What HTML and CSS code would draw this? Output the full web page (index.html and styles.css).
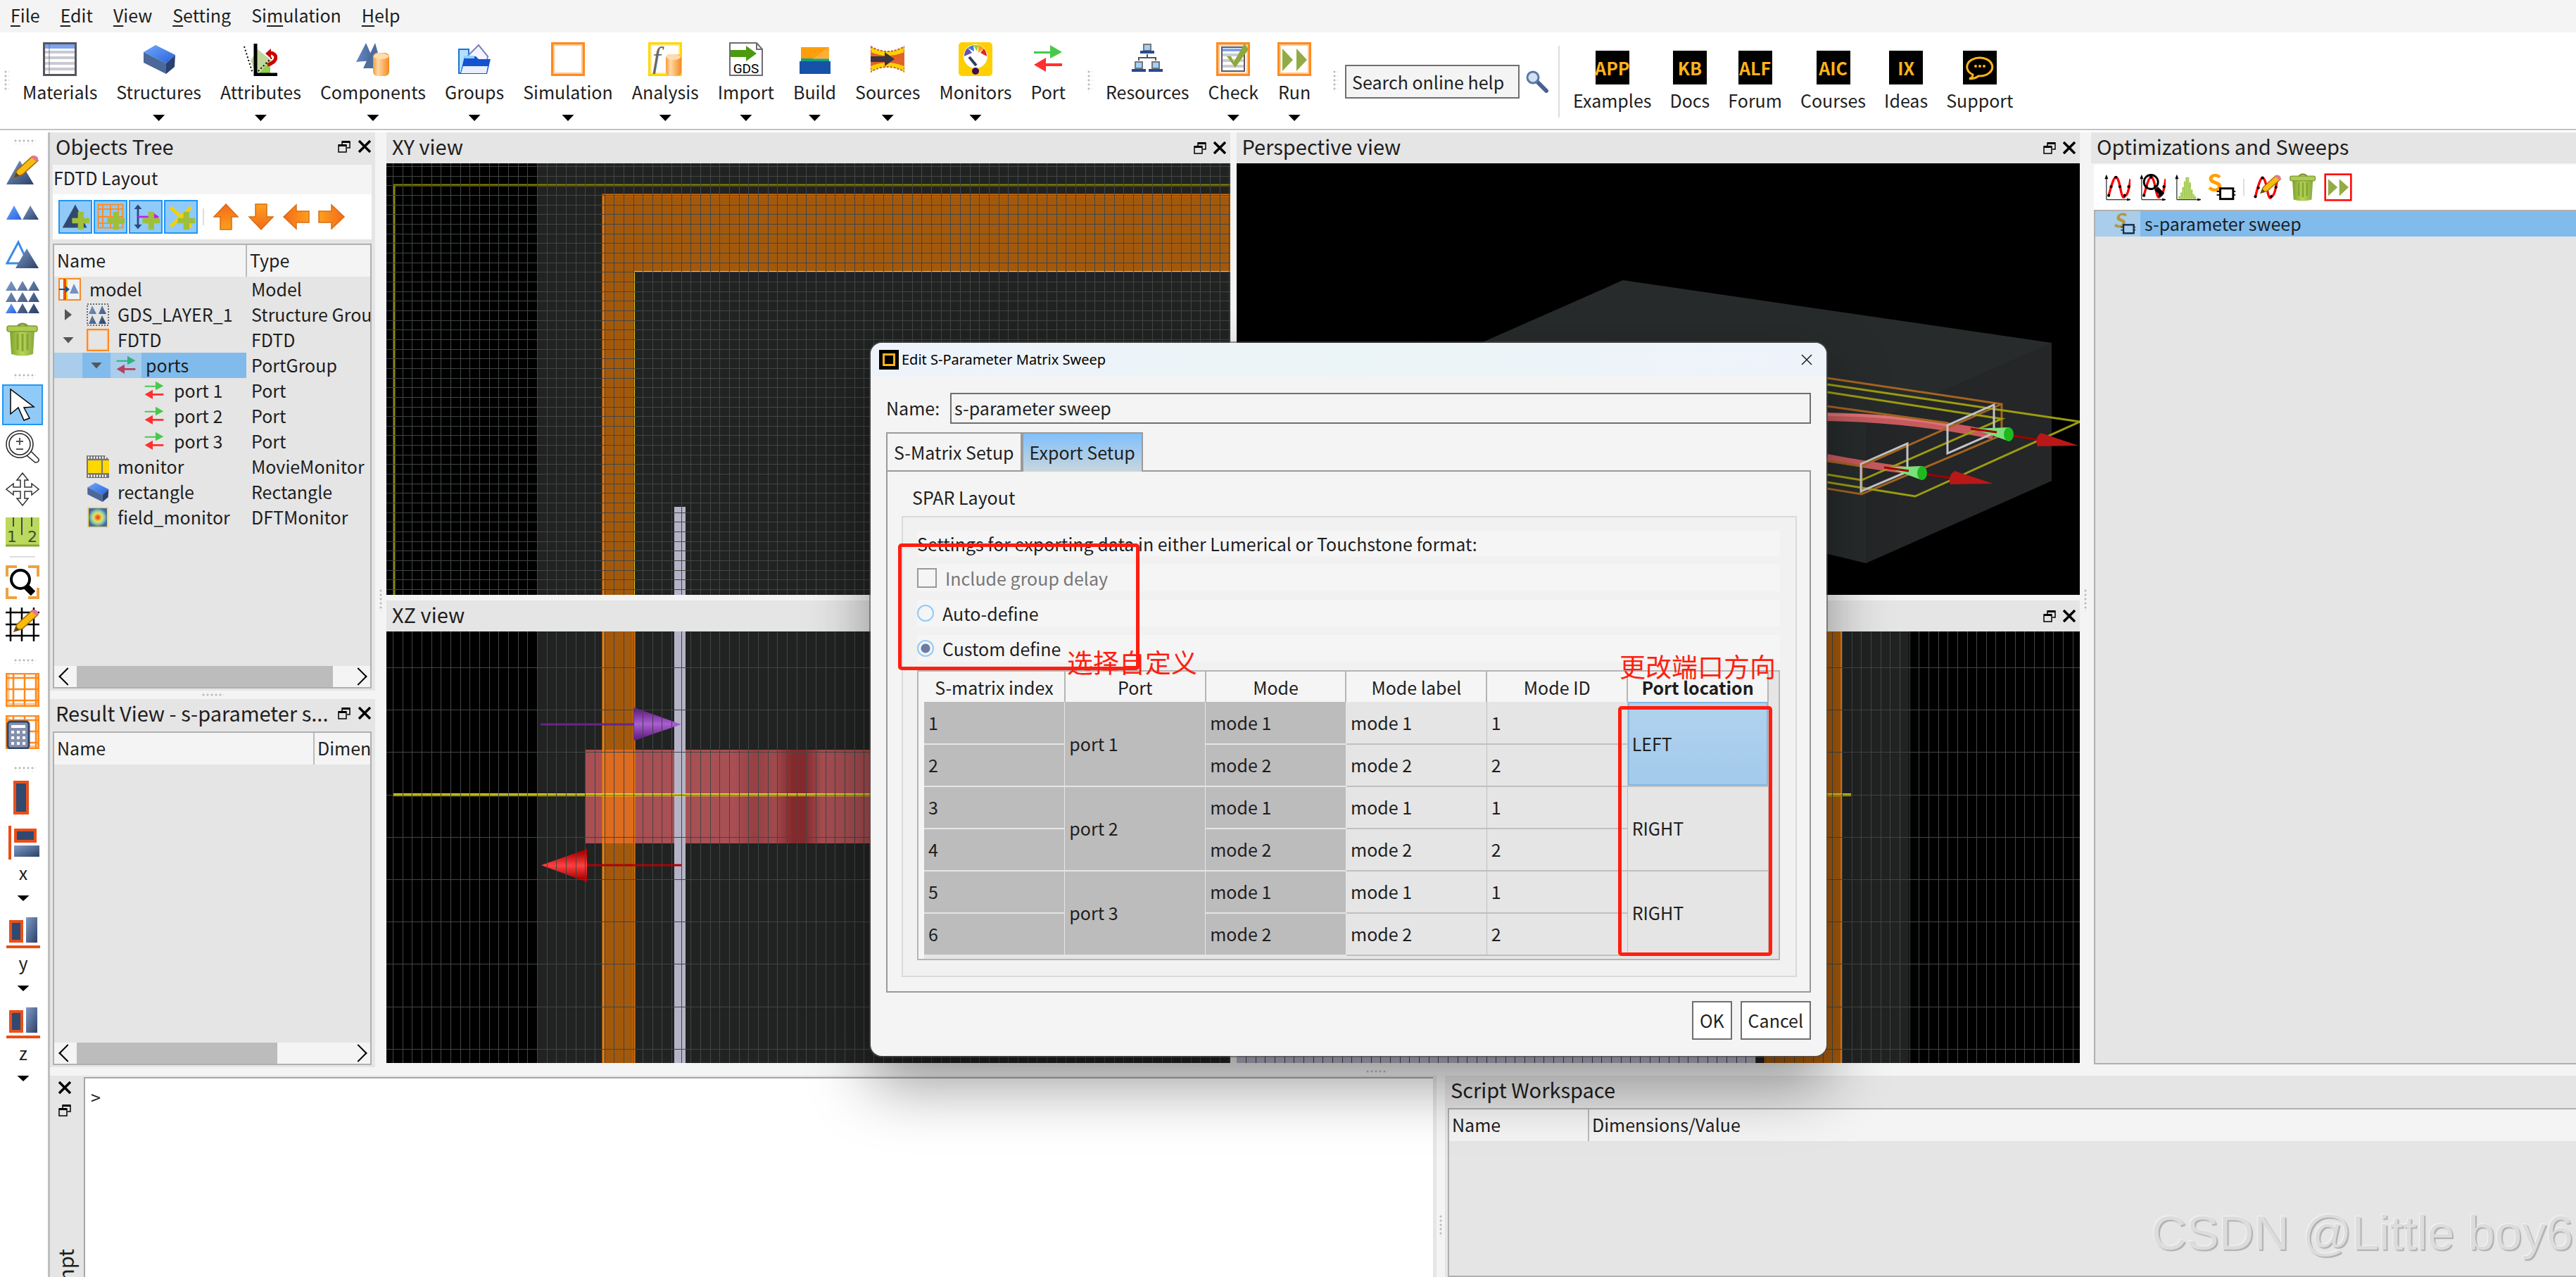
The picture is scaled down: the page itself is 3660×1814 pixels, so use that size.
FILE: index.html
```html
<!DOCTYPE html>
<html lang="en">
<head>
<meta charset="utf-8">
<title>FDTD Layout</title>
<link rel="stylesheet" href="styles.css">
</head>
<body>
<svg class="defs" aria-hidden="true">
  <defs>
    <linearGradient id="gBlue" x1="0" y1="0" x2="1" y2="1"><stop offset="0" stop-color="#6fa8ff"/><stop offset="1" stop-color="#2a62d8"/></linearGradient>
    <linearGradient id="gSteel" x1="0" y1="0" x2="1" y2="1"><stop offset="0" stop-color="#7f9cc8"/><stop offset="1" stop-color="#2c4068"/></linearGradient>
    <linearGradient id="gSteelH"><stop offset="0" stop-color="#6287c4"/><stop offset="1" stop-color="#4a6898"/></linearGradient>
    <linearGradient id="gCyl"><stop offset="0" stop-color="#f79a32"/><stop offset=".3" stop-color="#ffd9a8"/><stop offset="1" stop-color="#f58a1c"/></linearGradient>
    <linearGradient id="gGreen"><stop offset="0" stop-color="#7da32c"/><stop offset=".5" stop-color="#b9d65a"/><stop offset="1" stop-color="#86a93a"/></linearGradient>
    <linearGradient id="gOrange" x1="0" y1="0" x2="0" y2="1"><stop offset="0" stop-color="#f5691a"/><stop offset="1" stop-color="#fca01e"/></linearGradient>
    <linearGradient id="gPink" x1="0" x2="1"><stop offset="0" stop-color="#a85054"/><stop offset=".5" stop-color="#a85054"/><stop offset=".57" stop-color="#964044"/><stop offset=".64" stop-color="#a04a4d"/><stop offset=".7" stop-color="#842a2d"/><stop offset=".74" stop-color="#842a2d"/><stop offset=".8" stop-color="#a64e52"/><stop offset="1" stop-color="#a04a4d"/></linearGradient>
    <linearGradient id="gPurpleCone" x1="0" y1="0" x2="0" y2="1"><stop offset=".1" stop-color="#6a238d"/><stop offset=".5" stop-color="#a95fd0"/><stop offset=".9" stop-color="#6a238d"/></linearGradient>
    <linearGradient id="gRedCone" x1="0" y1="0" x2="0" y2="1"><stop offset=".1" stop-color="#b00000"/><stop offset=".5" stop-color="#ff4040"/><stop offset=".9" stop-color="#b00000"/></linearGradient>
    <radialGradient id="gField"><stop offset="0" stop-color="#e6322a"/><stop offset=".25" stop-color="#f08a2a"/><stop offset=".45" stop-color="#e8e060"/><stop offset=".7" stop-color="#8fd0a0"/><stop offset="1" stop-color="#4a78b8"/></radialGradient>
  </defs>
  <symbol id="i-materials" viewBox="0 0 48 48"><rect x="1.500" y="1.500" width="45" height="45" fill="#fff" stroke="#59555f" stroke-width="3"/><rect x="3" y="3" width="42" height="6" fill="#7ba5ee"/><path d="M3 14h42M3 22h42M3 30h42M3 38h42" stroke="#c9c9d1" stroke-width="4"/><path d="M9 3v42" stroke="#77747c"/></symbol>
  <symbol id="i-slab" viewBox="0 0 48 48"><path d="M2 14L19 4 47 18 34 30z" fill="url(#gBlue)"/><path d="M2 14L34 30V45L2 29z" fill="#4a6898"/><path d="M34 30L47 18 46 35 34 45z" fill="#2b4270"/></symbol>
  <symbol id="i-attributes" viewBox="0 0 48 48"><path d="M20 10l20 16-22 20-8-20z" fill="#c3d69a"/><path d="M20 46L38 26v20z" fill="#92cf4e"/><path d="M1 6l12 38M40 22L18 44" stroke="#000" stroke-width="2" stroke-dasharray="2 3"/><path d="M17 2v44h31" fill="none" stroke="#000" stroke-width="5"/><path d="M34 32c15-4 15-16 4-17" fill="none" stroke="#c00" stroke-width="5"/><path d="M31 16l8-7v14z" fill="#c00"/></symbol>
  <symbol id="i-components" viewBox="0 0 48 48"><path d="M0 28L14 1l11 25z" fill="url(#gSteelH)"/><path d="M10 37L27 1l10 36z" fill="#4d6d9e"/><rect x="24" y="15" width="23" height="33" rx="6" fill="url(#gCyl)"/><ellipse cx="35.500" cy="20" rx="11" ry="4" fill="#ffdcb0"/></symbol>
  <symbol id="i-groups" viewBox="0 0 48 48"><path d="M2 10h14v34H2z" fill="#aee0ff" stroke="#1b74d0" stroke-width="2"/><path d="M10 24L30 4l13 16-4 24H14z" fill="#f2f5ff" stroke="#7a82c0" stroke-width="2"/><path d="M10 20h16l4 4h17l-5 21H4z" fill="#1453cf"/><path d="M8 34h35l-2 10H5z" fill="#e8f0ff"/><path d="M10 21h14" stroke="#8fd0ff" stroke-width="4"/></symbol>
  <symbol id="i-sim" viewBox="0 0 48 48"><rect x="1.500" y="1.500" width="45" height="45" fill="#fff" fill-opacity="0" stroke="#ff8a1e" stroke-width="3"/><rect x="4" y="4" width="40" height="40" fill="none" stroke="#ffc795" stroke-width="2"/></symbol>
  <symbol id="i-build" viewBox="0 0 48 48"><path d="M4 7h40v17H4z" fill="#ff9e0a"/><path d="M4 23h40v4H4z" fill="#10a384"/><path d="M2 27h44v18H2z" fill="#1653a8"/><path d="M44 7v17H20z" fill="#ffc068" opacity=".5"/></symbol>
  <symbol id="i-sources" viewBox="0 0 48 48"><path d="M0 6q24 14 48 0v36q-24-14-48 0z" fill="#ffd000" stroke="#b8603a" stroke-width="2" stroke-dasharray="3 2"/><path d="M0 14q24 10 48 0v20q-24-10-48 0z" fill="#e0622a"/><path d="M0 20h20v-6l14 10-14 10v-6H0z" fill="#3a3340"/></symbol>
  <symbol id="i-monitors" viewBox="0 0 48 48"><rect width="48" height="48" rx="5" fill="#ffcf00"/><circle cx="24" cy="20" r="17" fill="#fff"/><path d="M8 20a16 16 0 0 1 5-12l6 7z" fill="#6a4fb0"/><path d="M13 8q4-3 8-4l1 9z" fill="#3a80d0"/><path d="M21 4h7l-2 9z" fill="#9bcf30"/><path d="M28 4q5 1 8 5l-8 6z" fill="#f7a020"/><path d="M36 9q4 5 4 11l-9-5z" fill="#e02818"/><path d="M15 21l10 12" stroke="#2c4262" stroke-width="4"/><circle cx="24" cy="41" r="5" fill="#3a1050"/></symbol>
  <symbol id="i-port" viewBox="0 0 48 48"><path d="M4 13h23V4l17 10-17 9v-7H4z" fill="#48c94b"/><path d="M44 30H21v-8L4 32l17 10v-8h23z" fill="#ff3030"/></symbol>
  <symbol id="i-portsel" viewBox="0 0 48 48"><path d="M4 13h23V4l17 10-17 9v-7H4z" fill="#34b07a"/><path d="M44 30H21v-8L4 32l17 10v-8h23z" fill="#b8405e"/></symbol>
  <symbol id="i-resources" viewBox="0 0 48 48"><g fill="#9fd0ff" stroke="#777" stroke-width="2"><path d="M19 3h10v9H19zM7 28h10v9H7zM31 28h10v9H31z"/></g><path d="M24 17v5M12 26v-4h24v4" fill="none" stroke="#555" stroke-width="2"/><path d="M14 12h20v4H14zM2 38h20v4H2zM26 38h20v4H26z" fill="#23499a"/></symbol>
  <symbol id="i-check" viewBox="0 0 48 48"><rect x="1.500" y="1.500" width="45" height="45" fill="#fff" stroke="#ff8a1e" stroke-width="3"/><rect x="4" y="4" width="40" height="40" fill="none" stroke="#ffc795" stroke-width="2"/><rect x="8" y="7" width="32" height="34" fill="#fff" stroke="#5b5862" stroke-width="2"/><path d="M9 9h30v4H9z" fill="#7ba5ee"/><path d="M9 18h30M9 26h30M9 34h30" stroke="#cbcbd2" stroke-width="4"/><path d="M15 20h6l4 8L40 2l6 8-19 26z" fill="#8ca83e"/></symbol>
  <symbol id="i-run" viewBox="0 0 48 48"><rect x="1.500" y="1.500" width="45" height="45" fill="#fff" stroke="#ff8a1e" stroke-width="3"/><rect x="4" y="4" width="40" height="40" fill="none" stroke="#ffc795" stroke-width="2"/><path d="M7 9l15 16L7 41zM27 9l15 16-15 16z" fill="#93ab45"/></symbol>
  <symbol id="i-runred" viewBox="0 0 48 48"><rect x="2" y="2" width="44" height="44" fill="#fff" stroke="red" stroke-width="3"/><path d="M7 10l16 14L7 39zM26 10l16 14-16 15z" fill="#93ab45"/></symbol>
  <symbol id="i-search" viewBox="0 0 32 32"><path d="M17 17l12 12" stroke="#4a628c" stroke-width="6" stroke-linecap="round"/><circle cx="10" cy="10" r="8" fill="#d3e0f2" stroke="#5c78a8" stroke-width="3"/></symbol>
  <symbol id="i-support" viewBox="0 0 48 48"><path d="M14 34a18 13 0 1 1 8 2q-5 4-13 4 5-2 5-6z" fill="none" stroke="#ffb31a" stroke-width="3"/><g fill="#ffb31a"><circle cx="18" cy="22" r="2"/><circle cx="24" cy="22" r="2"/><circle cx="30" cy="22" r="2"/></g></symbol>
  <symbol id="i-float" viewBox="0 0 18 18"><path d="M6 6V2h11v9h-4" fill="none" stroke="#000" stroke-width="1.500"/><path d="M6 2.500h11M1 7.500h11" stroke="#000" stroke-width="3"/><path d="M1 7h11v10H1z" fill="none" stroke="#000" stroke-width="1.500"/></symbol>
  <symbol id="i-close" viewBox="0 0 18 18"><path d="M1 1l16 16M17 1L1 17" stroke="#000" stroke-width="3.500"/></symbol>
  <symbol id="i-pencil" viewBox="0 0 48 48"><path d="M12 34l4-10 22-20 8 6-22 20z" fill="#f9bb0e" stroke="#a0670a" stroke-width="1.500"/><path d="M36 5q5-4 9 0 3 3-1 7z" fill="#e8729a"/><path d="M12 34l3-7 5 5z" fill="#5a4a20"/></symbol>
  <symbol id="i-edit" viewBox="0 0 48 48"><path d="M1 44L20 10l20 34z" fill="url(#gSteel)"/><use href="#i-pencil"/></symbol>
  <symbol id="i-two" viewBox="0 0 48 48"><path d="M1 34L12 14l11 20z" fill="url(#gBlue)"/><path d="M24 34L35 14l12 20z" fill="url(#gSteel)"/></symbol>
  <symbol id="i-overlap" viewBox="0 0 48 48"><path d="M2 36L18 6l14 30z" fill="#fff" stroke="#3a8be8" stroke-width="3"/><path d="M14 43L30 15l17 28z" fill="url(#gSteel)"/></symbol>
  <symbol id="i-nine" viewBox="0 0 48 48"><g fill="url(#gSteel)"><path d="M0 15L8 1l8 14zM16 15l8-14 8 14zM32 15l8-14 8 14zM0 31l8-14 8 14zM16 31l8-14 8 14zM32 31l8-14 8 14zM16 47l8-14 8 14zM32 47l8-14 8 14z"/></g><path d="M0 47l8-14 8 14z" fill="url(#gBlue)"/></symbol>
  <symbol id="i-trash" viewBox="0 0 48 48"><path d="M17 5q7-6 14 0" fill="none" stroke="#7d9a34" stroke-width="3"/><path d="M6 12h35l-2 33q-15 5-31 0z" fill="url(#gGreen)"/><path d="M17 16v23M24 16v25M31 16v23" stroke="#84a433" stroke-width="3"/><rect x="2" y="5" width="43" height="8" rx="3" fill="#aecb52" stroke="#7d9a34" stroke-width="1.500"/></symbol>
  <symbol id="i-cursor" viewBox="0 0 48 48"><path d="M7 2v35l11-9 8 18 8-3-8-15 14-1z" fill="#fff" stroke="#000" stroke-width="1.500"/></symbol>
  <symbol id="i-zoom" viewBox="0 0 48 48"><g fill="#fff" stroke="#222" stroke-width="1.500"><path d="M30 36l6-6 11 11q1 5-5 5z"/><circle cx="20" cy="20" r="19"/><circle cx="20" cy="20" r="15"/></g><path d="M15 16h10M20 11v10M15 27h10" stroke="#555" stroke-width="2"/></symbol>
  <symbol id="i-move" viewBox="0 0 48 48"><path d="M24 1l8 10h-5v10h10v-5l10 8-10 8v-5H27v10h5l-8 10-8-10h5V27H11v5L1 24l10-8v5h10V11h-5z" fill="#fff" stroke="#333" stroke-width="1.500"/></symbol>
  <symbol id="i-fit" viewBox="0 0 48 48"><path d="M2 16V2h14M32 2h14v14M46 32v14H32M16 46H2V32" fill="none" stroke="#eea244" stroke-width="4"/><path d="M29 30l10 10" stroke="#000" stroke-width="9"/><circle cx="21" cy="20" r="13" fill="#fff" stroke="#000" stroke-width="4"/></symbol>
  <symbol id="i-gridedit" viewBox="0 0 48 48"><path d="M7 0v48M23 0v48M40 0v48M0 7h48M0 24h48M0 40h48" stroke="#000" stroke-width="2.500"/><use href="#i-pencil"/></symbol>
  <symbol id="i-grid" viewBox="0 0 48 48"><rect x="1" y="1" width="46" height="46" fill="#fff"/><path d="M3 1v46M45 1v46M1 45h46" stroke="#ffc795" stroke-width="5"/><path d="M1 1h46v46H1zM11 1v46M27 1v46M43 1v46M1 7h46M1 23h46M1 39h46" fill="none" stroke="#ff8a1e" stroke-width="2.500"/></symbol>
  <symbol id="i-calc" viewBox="0 0 48 48"><use href="#i-grid"/><rect x="3" y="9" width="30" height="38" rx="4" fill="#8590ac" stroke="#31466e" stroke-width="3"/><path d="M8 16h20M8 24h20M8 32h20M8 40h20" stroke="#fff" stroke-width="4" stroke-dasharray="4 4"/><path d="M8 16h20" stroke="#fff" stroke-width="4"/></symbol>
  <symbol id="i-alignone" viewBox="0 0 48 48"><rect x="13" y="2" width="18" height="44" fill="#31486f" stroke="#e84f1a" stroke-width="4"/></symbol>
  <symbol id="i-alignx" viewBox="0 0 48 48"><path d="M5 0v48" stroke="#e84f1a" stroke-width="4"/><rect x="13" y="6" width="28" height="16" fill="#31486f" stroke="#e84f1a" stroke-width="4"/><rect x="11" y="28" width="36" height="16" fill="url(#gSteel)"/></symbol>
  <symbol id="i-aligny" viewBox="0 0 48 48"><path d="M0 44h48" stroke="#e84f1a" stroke-width="4"/><rect x="6" y="8" width="16" height="28" fill="#31486f" stroke="#e84f1a" stroke-width="4"/><rect x="28" y="2" width="16" height="36" fill="url(#gSteel)"/></symbol>
  <symbol id="i-plus" viewBox="0 0 48 48"><path d="M28 16h9v10h9v8h-9v10h-9V34h-9v-8h9z" fill="#9fbf3a"/></symbol>
  <symbol id="i-addtri" viewBox="0 0 48 48"><path d="M4 41L24 5l18 36z" fill="#31486f"/><use href="#i-plus"/></symbol>
  <symbol id="i-addgrid" viewBox="0 0 48 48"><path d="M5 5h38v36H5zM12 5v36M24 5v36M36 5v36M5 12h38M5 24h38M5 34h38" fill="none" stroke="#ff8a1e" stroke-width="2"/><use href="#i-plus"/></symbol>
  <symbol id="i-addaxis" viewBox="0 0 48 48"><path d="M12 8v32" stroke="#2a4a80" stroke-width="3"/><path d="M6 12l6-7 6 7zM6 36l6 7 6-7z" fill="#2a4a80"/><path d="M12 24h26" stroke="#c020e8" stroke-width="3"/><path d="M36 18l9 6-9 6z" fill="#c020e8"/><use href="#i-plus"/></symbol>
  <symbol id="i-addmon" viewBox="0 0 48 48"><path d="M8 9l32 30M40 9L8 39" stroke="#f7d000" stroke-width="5"/><use href="#i-plus"/></symbol>
  <symbol id="i-up" viewBox="0 0 48 48"><path d="M24 6l17 18h-9v18H16V24H7z" fill="url(#gOrange)" stroke="#d96c10" stroke-width="1.500"/></symbol>
  <symbol id="i-model" viewBox="0 0 32 32"><rect x="1" y="1" width="30" height="30" fill="#f2f2f2" stroke="#f58a2c" stroke-width="2"/><path d="M9 1v30" stroke="#e84f1a" stroke-width="4"/><path d="M12 1v30" stroke="#ffcf00" stroke-width="2"/><path d="M1 15h9v-4l6 5-6 5v-4H1z" fill="#0a5a9c"/><path d="M16 22l6-14 7 14z" fill="#7390c8"/></symbol>
  <symbol id="i-group" viewBox="0 0 32 32"><rect x="1" y="1" width="30" height="30" fill="none" stroke="#444" stroke-width="1.500" stroke-dasharray="2 2"/><path d="M3 15L8 3l6 12zM17 15l5-12 6 12zM3 29l5-12 6 12zM17 29l5-12 6 12z" fill="url(#gSteel)"/></symbol>
  <symbol id="i-film" viewBox="0 0 32 32"><path d="M0 0h26l6 6v26H0z" fill="#77757c"/><path d="M2 3h28M2 29h28" stroke="#fff" stroke-width="3" stroke-dasharray="2 2"/><path d="M2 7h19v18H2zM23 7h9v18h-9z" fill="#ffd800"/></symbol>
  <symbol id="i-field" viewBox="0 0 32 32"><rect x="1" y="1" width="30" height="30" fill="#ffd94a"/><rect x="3" y="3" width="26" height="26" fill="#4068b0"/><circle cx="16" cy="16" r="13" fill="url(#gField)"/></symbol>
  <symbol id="i-curve" viewBox="0 0 48 48"><path d="M7 45V5M7 45h40" stroke="#333" stroke-width="1.500"/><path d="M7 2l3 8H4zM50 45l-8-2v4z" fill="#000"/><path d="M11 38q8-32 12-31 4-1 8 20t8 11q5 1 9-28" fill="none" stroke="red" stroke-width="4"/><g><circle cx="11" cy="38" r="2.500"/><circle cx="15" cy="23" r="2.500"/><circle cx="23" cy="7" r="2.500"/><circle cx="30" cy="23" r="2.500"/><circle cx="38" cy="38" r="2.500"/><circle cx="45" cy="23" r="2.500"/></g></symbol>
  <symbol id="i-optim" viewBox="0 0 48 48"><use href="#i-curve"/><path d="M32 26l11 11" stroke="#000" stroke-width="8"/><circle cx="23" cy="15" r="12" fill="none" stroke="#000" stroke-width="3.500"/></symbol>
  <symbol id="i-hist" viewBox="0 0 48 48"><path d="M7 45V5M7 45h40" stroke="#333" stroke-width="1.500"/><path d="M7 2l3 8H4zM50 45l-8-2v4z" fill="#000"/><path d="M10 44v-5h3v-6h3v-9h3v-10h3V7h6v9h3v12h3v8h3v4h3v4z" fill="#a6cc56"/><path d="M14 44v-8M18 44V28M22 44V12M26 44V8M30 44V24M34 44v-7" stroke="#c4e08a" stroke-width="1"/></symbol>
  <symbol id="i-curveedit" viewBox="0 0 48 48"><path d="M3 40q8-33 12-32 4-1 8 20t8 11q5 1 9-28" fill="none" stroke="red" stroke-width="4"/><g><circle cx="3" cy="40" r="2.500"/><circle cx="8" cy="25" r="2.500"/><circle cx="15" cy="8" r="2.500"/><circle cx="30" cy="40" r="2.500"/><circle cx="38" cy="24" r="2.500"/></g><use href="#i-pencil"/></symbol>
</svg>

<nav class="menubar">
  <button><u>F</u>ile</button><button><u>E</u>dit</button><button><u>V</u>iew</button><button><u>S</u>etting</button><button>Si<u>m</u>ulation</button><button><u>H</u>elp</button>
</nav>

<header class="toolbar">
  <span class="grip grip-v"></span>
  <button class="tool"><svg><use href="#i-materials"/></svg>Materials</button>
  <button class="tool drop"><svg><use href="#i-slab"/></svg>Structures</button>
  <button class="tool drop"><svg><use href="#i-attributes"/></svg>Attributes</button>
  <button class="tool drop"><svg><use href="#i-components"/></svg>Components</button>
  <button class="tool drop"><svg><use href="#i-groups"/></svg>Groups</button>
  <button class="tool drop"><svg><use href="#i-sim"/></svg>Simulation</button>
  <button class="tool drop"><svg viewBox="0 0 48 48"><rect x="1.500" y="1.500" width="45" height="45" fill="#fff" stroke="#ffd800" stroke-width="3"/><rect x="4" y="4" width="40" height="40" fill="none" stroke="#ffe98f" stroke-width="2"/><text x="6" y="36" font-family="Liberation Serif, serif" font-style="italic" font-size="42" fill="#666">f</text><rect x="25" y="17" width="22" height="31" rx="6" fill="url(#gCyl)"/><ellipse cx="36" cy="21" rx="10" ry="4" fill="#ffdcb0"/></svg>Analysis</button>
  <button class="tool drop"><svg viewBox="0 0 48 48"><path d="M1 1h38l8 9v37H1z" fill="#fff" stroke="#6f6b73" stroke-width="2"/><path d="M39 1v9h8" fill="none" stroke="#6f6b73" stroke-width="2"/><path d="M2 11h22V5l15 11-15 11v-6H2z" fill="#4c9a10"/><text x="24" y="44" text-anchor="middle" font-family="Roboto, sans-serif" font-size="19" fill="#000">GDS</text></svg>Import</button>
  <button class="tool drop"><svg><use href="#i-build"/></svg>Build</button>
  <button class="tool drop"><svg><use href="#i-sources"/></svg>Sources</button>
  <button class="tool drop"><svg><use href="#i-monitors"/></svg>Monitors</button>
  <button class="tool"><svg><use href="#i-port"/></svg>Port</button>
  <span class="grip grip-v spaced"></span>
  <button class="tool"><svg><use href="#i-resources"/></svg>Resources</button>
  <button class="tool drop"><svg><use href="#i-check"/></svg>Check</button>
  <button class="tool drop"><svg><use href="#i-run"/></svg>Run</button>
  <span class="grip grip-v spaced"></span>
  <form class="search">
    <input type="text" value="Search online help" aria-label="Search online help">
    <button type="button"><svg><use href="#i-search"/></svg></button>
  </form>
  <div class="links">
    <a href="#examples"><b>APP</b>Examples</a>
    <a href="#docs"><b>KB</b>Docs</a>
    <a href="#forum"><b>ALF</b>Forum</a>
    <a href="#courses"><b>AIC</b>Courses</a>
    <a href="#ideas"><b>IX</b>Ideas</a>
    <a href="#support"><b><svg><use href="#i-support"/></svg></b>Support</a>
  </div>
</header>

<div class="workspace">
  <aside class="sidebar">
    <span class="grip grip-h"></span>
    <button class="side"><svg><use href="#i-edit"/></svg></button>
    <button class="side"><svg><use href="#i-two"/></svg></button>
    <button class="side"><svg><use href="#i-overlap"/></svg></button>
    <button class="side"><svg><use href="#i-nine"/></svg></button>
    <button class="side"><svg><use href="#i-trash"/></svg></button>
    <span class="grip grip-h"></span>
    <button class="side on"><svg><use href="#i-cursor"/></svg></button>
    <button class="side"><svg><use href="#i-zoom"/></svg></button>
    <button class="side"><svg><use href="#i-move"/></svg></button>
    <button class="side"><svg viewBox="0 0 48 48"><path d="M0 4h48v40H0z" fill="#bbd95c"/><path d="M0 44h48" stroke="#8aa53c" stroke-width="3"/><path d="M11 4v13M37 4v13M23 4v25" stroke="#3b4d5c" stroke-width="2"/><text x="9" y="39" text-anchor="middle" font-family="DejaVu Sans, sans-serif" font-size="22" fill="#3b4d3c">1</text><text x="38" y="39" text-anchor="middle" font-family="DejaVu Sans, sans-serif" font-size="22" fill="#3b4d3c">2</text></svg></button>
    <hr>
    <button class="side"><svg><use href="#i-fit"/></svg></button>
    <button class="side"><svg><use href="#i-gridedit"/></svg></button>
    <span class="grip grip-h"></span>
    <button class="side"><svg><use href="#i-grid"/></svg></button>
    <button class="side"><svg><use href="#i-calc"/></svg></button>
    <span class="grip grip-h"></span>
    <button class="side"><svg><use href="#i-alignone"/></svg></button>
    <button class="axis"><svg><use href="#i-alignx"/></svg>x</button>
    <button class="axis"><svg><use href="#i-aligny"/></svg>y</button>
    <button class="axis"><svg><use href="#i-aligny"/></svg>z</button>
  </aside>

  <div class="docks">
    <div class="upper">
      <div class="left-docks">
        <section class="dock tree-dock">
          <h2 class="title"><span>Objects Tree</span><button><svg><use href="#i-float"/></svg></button><button><svg><use href="#i-close"/></svg></button></h2>
          <p class="mode">FDTD Layout</p>
          <div class="tree-tools">
            <button class="on"><svg><use href="#i-addtri"/></svg></button>
            <button class="on"><svg><use href="#i-addgrid"/></svg></button>
            <button class="on"><svg><use href="#i-addaxis"/></svg></button>
            <button class="on"><svg><use href="#i-addmon"/></svg></button>
            <i class="sep"></i>
            <button><svg><use href="#i-up"/></svg></button>
            <button class="down"><svg><use href="#i-up"/></svg></button>
            <button class="back"><svg><use href="#i-up"/></svg></button>
            <button class="fwd"><svg><use href="#i-up"/></svg></button>
          </div>
          <div class="listbox">
            <table class="tree">
              <thead><tr><th class="c-name">Name</th><th>Type</th></tr></thead>
              <tbody>
                <tr><td><div class="node"><i class="ic"><svg><use href="#i-model"/></svg></i>model</div></td><td>Model</td></tr>
                <tr><td><div class="node"><i class="ex shut"></i><i class="ic"><svg><use href="#i-group"/></svg></i>GDS_LAYER_1</div></td><td>Structure Group</td></tr>
                <tr><td><div class="node"><i class="ex open"></i><i class="ic"><svg><use href="#i-sim"/></svg></i>FDTD</div></td><td>FDTD</td></tr>
                <tr class="sel"><td><div class="node"><i class="ex"></i><i class="ex open"></i><i class="ic"><svg><use href="#i-portsel"/></svg></i>ports</div></td><td>PortGroup</td></tr>
                <tr><td><div class="node"><i class="ex"></i><i class="ex"></i><i class="ex"></i><i class="ic"><svg><use href="#i-port"/></svg></i>port 1</div></td><td>Port</td></tr>
                <tr><td><div class="node"><i class="ex"></i><i class="ex"></i><i class="ex"></i><i class="ic"><svg><use href="#i-port"/></svg></i>port 2</div></td><td>Port</td></tr>
                <tr><td><div class="node"><i class="ex"></i><i class="ex"></i><i class="ex"></i><i class="ic"><svg><use href="#i-port"/></svg></i>port 3</div></td><td>Port</td></tr>
                <tr><td><div class="node"><i class="ex"></i><i class="ic"><svg><use href="#i-film"/></svg></i>monitor</div></td><td>MovieMonitor</td></tr>
                <tr><td><div class="node"><i class="ex"></i><i class="ic"><svg><use href="#i-slab"/></svg></i>rectangle</div></td><td>Rectangle</td></tr>
                <tr><td><div class="node"><i class="ex"></i><i class="ic"><svg><use href="#i-field"/></svg></i>field_monitor</div></td><td>DFTMonitor</td></tr>
              </tbody>
            </table>
            <div class="scroll"><button class="prev"></button><span class="track"><i class="thumb"></i></span><button class="next"></button></div>
          </div>
        </section>
        <div class="split row"><span></span></div>
        <section class="dock result-dock">
          <h2 class="title"><span>Result View - s-parameter s...</span><button><svg><use href="#i-float"/></svg></button><button><svg><use href="#i-close"/></svg></button></h2>
          <div class="listbox">
            <table class="tree wide"><thead><tr><th class="c-name">Name</th><th>Dimensions</th></tr></thead></table>
            <div class="scroll"><button class="prev"></button><span class="track"><i class="thumb short"></i></span><button class="next"></button></div>
          </div>
        </section>
      </div>

      <div class="split col"><span></span></div>

      <main class="views">
        <section class="view">
          <h2 class="title"><span>XY view</span><button><svg><use href="#i-float"/></svg></button><button><svg><use href="#i-close"/></svg></button></h2>
          <svg class="canvas">
            <rect width="100%" height="100%" fill="#000"/>
            <rect x="214" width="100%" height="100%" fill="#212322"/>
            <path d="M307 700V44H1300V154H352V700z" fill="#a3590c"/>
            <path d="M308 700V45H1300" fill="none" stroke="#e87404" stroke-width="3"/>
            <path d="M352 700V154H1300" fill="none" stroke="#f0cc14" stroke-width="2"/>
            <path d="M11 700V31H1300" fill="none" stroke="#8a8808" stroke-width="3"/>
            <rect x="409" y="488" width="16" height="200" fill="#b5b4c6"/>
            <g class="mesh"><path d="M9 350H1300" stroke-width="700" stroke-dasharray="1 12.660"/><path d="M650 4V700" stroke-width="1300" stroke-dasharray="1 12.660"/></g>
          </svg>
        </section>
        <section class="view">
          <h2 class="title"><span>Perspective view</span><button><svg><use href="#i-float"/></svg></button><button><svg><use href="#i-close"/></svg></button></h2>
          <svg class="canvas">
            <rect width="100%" height="100%" fill="#000"/>
            <path d="M549 166L1158 255V451L894 568 200 400V320z" fill="#272b2b"/>
            <path d="M1158 255L894 371V568L1158 451z" fill="#252627"/>
            <path d="M839 360Q960 362 1075 386" fill="none" stroke="#c75a5e" stroke-width="12"/>
            <path d="M839 357Q940 358 1010 372" fill="none" stroke="#db7478" stroke-width="4"/>
            <path d="M839 418Q890 428 952 436" fill="none" stroke="#c75a5e" stroke-width="10"/>
            <g fill="none" stroke="#a3641f" stroke-width="3"><path d="M839 305L1087 342V386L888 470 839 462M1087 342L888 430V470M839 423L888 430M839 345L1011 369"/></g>
            <g fill="none" stroke="#9c9c10" stroke-width="3"><path d="M839 314L1198 367 964 473 839 453M839 325L1087 363 888 450 839 442"/></g>
            <g fill="none" stroke="#c4c4c8" stroke-width="3"><path d="M1010 372L1076 343V383L1010 412zM887 427L953 398V438L887 466z"/></g>
            <g fill="#7be07b"><path d="M1047 377L1098 375V395z"/><path d="M924 432L974 430V450z"/></g>
            <g fill="#1fb81f"><ellipse cx="1097" cy="385" rx="7" ry="10"/><ellipse cx="974" cy="440" rx="7" ry="10"/></g>
            <path d="M1043 377L1080 382M1104 387L1140 393M920 432L955 437M982 442L1015 447" stroke="#a00000" stroke-width="3"/>
            <g fill="#b81818"><path d="M1143 383Q1133 390 1138 402L1196 401z"/><path d="M1020 437Q1010 444 1014 456L1075 455z"/></g>
          </svg>
        </section>
        <section class="view">
          <h2 class="title"><span>XZ view</span></h2>
          <svg class="canvas">
            <rect width="100%" height="100%" fill="#000"/>
            <rect x="214" width="100%" height="100%" fill="#212322"/>
            <rect x="283" y="168" width="420" height="133" fill="url(#gPink)"/>
            <rect x="307" width="45" height="100%" fill="#a3590c"/>
            <rect x="307" y="168" width="45" height="133" fill="#dd6c20"/>
            <path d="M308 0V700M352 0V700" stroke="#f07c08" stroke-width="3"/>
            <rect x="409" width="16" height="100%" fill="#b5b4c6"/>
            <path d="M219 132H353" stroke="#6a238d" stroke-width="3"/><path d="M352 108L419 132 352 155z" fill="url(#gPurpleCone)"/>
            <path d="M284 332H419" stroke="#b00000" stroke-width="3"/><path d="M285 309L220 332 285 356z" fill="url(#gRedCone)"/>
            <path d="M10 232H1300" stroke="#e8dc14" stroke-width="4"/>
            <g class="mesh"><path d="M9 350H1300" stroke-width="700" stroke-dasharray="1 12.660"/><path d="M650 51V700" stroke-width="1300" stroke-dasharray="1 59.200"/></g>
          </svg>
        </section>
        <section class="view">
          <h2 class="title"><span></span><button><svg><use href="#i-float"/></svg></button><button><svg><use href="#i-close"/></svg></button></h2>
          <svg class="canvas">
            <rect width="100%" height="100%" fill="#000"/>
            <rect width="955" height="100%" fill="#212322"/>
            <rect width="737" height="100%" fill="#b5b4c6"/>
            <rect x="750" width="110" height="100%" fill="#a3590c"/>
            <path d="M751 0V700M859 0V700" stroke="#f07c08" stroke-width="2"/>
            <path d="M0 232H873" stroke="#e8dc14" stroke-width="4"/>
            <g class="mesh"><path d="M13 350H1300" stroke-width="700" stroke-dasharray="1 12.660"/><path d="M650 51V700" stroke-width="1300" stroke-dasharray="1 59.200"/></g>
          </svg>
        </section>
      </main>

      <div class="split col"><span></span></div>

      <section class="sweeps">
        <h2 class="title"><span>Optimizations and Sweeps</span></h2>
        <div class="sweep-tools">
          <button><svg><use href="#i-curve"/></svg></button>
          <button><svg><use href="#i-optim"/></svg></button>
          <button><svg><use href="#i-hist"/></svg></button>
          <button><svg viewBox="0 0 48 48"><text x="-1" y="31" font-family="Noto Sans CJK SC, sans-serif" font-weight="700" font-size="41" fill="#ffa000">S</text><path d="M15 31h32M15 37h32" stroke="#000" stroke-width="2"/><rect x="21" y="26" width="22" height="18" fill="#fff" stroke="#000" stroke-width="3.500"/></svg></button>
          <i class="sep"></i>
          <button><svg><use href="#i-curveedit"/></svg></button>
          <button><svg><use href="#i-trash"/></svg></button>
          <button><svg><use href="#i-runred"/></svg></button>
        </div>
        <ul class="sweep-list">
          <li><i><svg viewBox="0 0 48 48"><text x="-1" y="31" font-family="Noto Sans CJK SC, sans-serif" font-weight="700" font-size="41" fill="#b59743">S</text><path d="M15 31h32M15 37h32" stroke="#0c2c48" stroke-width="2"/><rect x="21" y="26" width="22" height="18" fill="#a9cdea" stroke="#0c2c48" stroke-width="3.500"/></svg></i>s-parameter sweep</li>
        </ul>
      </section>
    </div>

    <div class="split row wide"><span></span></div>

    <div class="lower">
      <section class="console">
        <div class="strip"><button><svg><use href="#i-close"/></svg></button><button><svg><use href="#i-float"/></svg></button><span>Script Prompt</span></div>
        <textarea aria-label="Script Prompt">&gt;</textarea>
      </section>
      <div class="split col"><span></span></div>
      <section class="dock vars">
        <h2 class="title"><span>Script Workspace</span></h2>
        <div class="listbox">
          <table class="tree"><thead><tr><th class="c-name">Name</th><th>Dimensions/Value</th></tr></thead></table>
        </div>
      </section>
    </div>
  </div>
</div>

<div class="watermark">CSDN @Little boy6</div>

<div class="dialog" role="dialog">
  <div class="caption"><svg viewBox="0 0 28 28"><path d="M0 0h28v28H0z"/><path d="M6.500 6.500h15v15h-15z" fill="none" stroke="#ffb31a" stroke-width="3"/></svg><span>Edit S-Parameter Matrix Sweep</span><button><svg viewBox="0 0 16 16"><path d="M1 1l14 14M15 1L1 15" stroke="#222" stroke-width="1.500"/></svg></button></div>
  <div class="field"><label for="name">Name:</label><input id="name" type="text" value="s-parameter sweep"></div>
  <div class="tabs"><button>S-Matrix Setup</button><button class="active">Export Setup</button></div>
  <div class="pane">
    <h3>SPAR Layout</h3>
    <div class="group">
      <p class="line first">Settings for exporting data in either Lumerical or Touchstone format:</p>
      <label class="line muted"><input type="checkbox" disabled>Include group delay</label>
      <label class="line"><input type="radio" name="def">Auto-define</label>
      <label class="line"><input type="radio" name="def" checked>Custom define</label>
      <div class="grid-frame">
        <table class="ports">
          <thead><tr><th>S-matrix index</th><th>Port</th><th>Mode</th><th>Mode label</th><th>Mode ID</th><th class="bold">Port location</th></tr></thead>
          <tbody>
            <tr><td class="ro">1</td><td class="ro" rowspan="2">port 1</td><td class="ro">mode 1</td><td>mode 1</td><td>1</td><td class="picked" rowspan="2">LEFT</td></tr>
            <tr><td class="ro">2</td><td class="ro">mode 2</td><td>mode 2</td><td>2</td></tr>
            <tr><td class="ro">3</td><td class="ro" rowspan="2">port 2</td><td class="ro">mode 1</td><td>mode 1</td><td>1</td><td rowspan="2">RIGHT</td></tr>
            <tr><td class="ro">4</td><td class="ro">mode 2</td><td>mode 2</td><td>2</td></tr>
            <tr><td class="ro">5</td><td class="ro" rowspan="2">port 3</td><td class="ro">mode 1</td><td>mode 1</td><td>1</td><td rowspan="2">RIGHT</td></tr>
            <tr><td class="ro">6</td><td class="ro">mode 2</td><td>mode 2</td><td>2</td></tr>
          </tbody>
        </table>
      </div>
    </div>
  </div>
  <div class="actions"><button>OK</button><button>Cancel</button></div>
  <div class="mark mark-define"></div>
  <div class="note note-define">选择自定义</div>
  <div class="mark mark-location"></div>
  <div class="note note-location">更改端口方向</div>
</div>
</body>
</html>
```
FILE: styles.css
```css
* { box-sizing: border-box; margin: 0; padding: 0; }

body {
  display: flex;
  flex-direction: column;
  height: 100vh;
  position: relative;
  overflow: hidden;
  background: #f4f4f4;
  color: #1e1e1e;
  font: 25px/36px "Noto Sans CJK SC", "Noto Sans", sans-serif;
}

button, input, textarea { font: inherit; color: inherit; border: 0; background: none; border-radius: 0; appearance: none; outline: 0; }
svg { display: block; }
a { color: inherit; text-decoration: none; }
.defs { position: absolute; width: 0; height: 0; }

/* menu bar and main toolbar */
.menubar { display: flex; gap: 29px; height: 46px; padding: 3px 15px; align-items: flex-start; }
.menubar u { text-underline-offset: 4px; text-decoration-thickness: 2px; }

.toolbar { display: flex; gap: 1px; height: 142px; background: #fff; padding-left: 5px; border-bottom: 3px solid #fff; box-shadow: inset 0 -2px #c3c3c3; }
.grip { flex: none; background-image: radial-gradient(circle, #bbb 1px, transparent 2px); background-size: 6px 6px; }
.grip-v { width: 8px; height: 32px; margin: 53px 5px 0 0; }
.grip-v.spaced { margin: 53px 5px 0 16px; }
.tool { display: flex; flex-direction: column; align-items: center; padding: 14px 13px 0; white-space: nowrap; }
.tool svg, .links svg { width: 48px; height: 48px; margin-bottom: 4px; }
.drop::after, .axis::after { content: ""; width: 17px; height: 9px; margin-top: 15px; background: #000; clip-path: polygon(0 0, 100% 0, 50% 100%); }

.search { display: flex; align-items: center; margin-left: 4px; }
.search input { width: 248px; height: 48px; padding: 0 8px; border: 2px solid #6f6f6f; background: #f4f4f4; }
.search button { padding: 0 12px 0 8px; }
.search svg { width: 34px; height: 32px; }
.links { display: flex; margin-top: 19px; height: 102px; padding-left: 6px; border-left: 2px solid #ddd; }
.links a { display: flex; flex-direction: column; align-items: center; padding: 7px 13px 0; white-space: nowrap; }
.links b { display: flex; justify-content: center; align-items: center; width: 48px; height: 48px; margin-bottom: 4px; background: #000; color: #ffb31a; font-size: 25px; }
.links b svg { margin: 0; }

/* vertical edit toolbar */
.workspace { display: flex; flex: 1; min-height: 0; }
.sidebar { display: flex; flex-direction: column; width: 71px; padding-left: 3px; background: #fff; border-right: 3px solid #bfbfbf; flex: none; overflow: hidden; }
.grip-h { width: 32px; height: 8px; margin: 19px 0 8px 16px; }
.grip-h:first-child { margin-top: 9px; }
.side { display: flex; flex: none; justify-content: center; align-items: center; width: 58px; height: 58px; margin-bottom: 2px; }
.side + .grip-h { margin-top: 17px; }
.side svg, .axis svg { width: 48px; height: 48px; }
.on { background: #90caf9; border: 2px solid #2196f3; }
.sidebar hr { width: 36px; height: 2px; flex: none; margin: 4px 0 6px 11px; border: 0; background: #ddd; }
.axis { display: flex; flex: none; flex-direction: column; align-items: center; width: 60px; height: 128px; padding-top: 9px; }
.axis::after { margin-top: 15px; height: 8px; }

/* docks */
.docks { display: flex; flex-direction: column; flex: 1; min-width: 0; }
.upper { display: flex; flex: 1; min-height: 0; }
.left-docks { display: flex; flex-direction: column; width: 462px; flex: none; }
.dock { display: flex; flex-direction: column; background: #e5e5e5; padding: 0 5px 3px 4px; }
.tree-dock { flex: 794 1 0; min-height: 0; }
.result-dock { flex: 522 1 0; min-height: 0; }
.title { display: flex; align-items: center; height: 44px; flex: none; padding: 0 6px 0 8px; background: #e5e5e5; font-size: 29px; font-weight: 400; line-height: 36px; white-space: nowrap; }
.title span { flex: 1; padding-bottom: 6px; }
.title svg, .strip svg { width: 18px; height: 18px; }
.title button { margin-left: 10px; }
.dock .title { padding: 0 0 0 4px; height: 46px; }
.dock .title button { margin: 0 1px 6px 10px; }
.dock .title span { padding-bottom: 8px; }

.split { display: flex; align-items: center; justify-content: center; flex: none; }
.split.row { height: 12px; }
.split.wide { padding-left: 180px; }
.split.col { width: 16px; }
.split span { background-image: radial-gradient(circle, #bbb 1px, transparent 2px); background-size: 6px 6px; }
.split.row span { width: 32px; height: 6px; }
.split.col span { width: 6px; height: 32px; }

.mode { height: 42px; padding-left: 1px; background: #f4f4f4; }
.tree-tools { display: flex; align-items: center; gap: 2px; height: 64px; padding: 0 8px; background: #fff; }
.tree-tools button { width: 48px; height: 48px; }
.tree-tools svg { width: 100%; height: 100%; }
.tree-tools .sep { width: 2px; height: 24px; margin: 0 5px; background: #ddd; }
.tree-tools .down svg { transform: rotate(180deg); }
.tree-tools .back svg { transform: rotate(270deg); }
.tree-tools .fwd svg { transform: rotate(90deg); }

.listbox { display: flex; flex-direction: column; flex: 1; min-height: 0; overflow: hidden; border: 2px solid #b0b0b0; }
.tree-dock .listbox { margin-top: 6px; }
.tree { width: 100%; table-layout: fixed; border-collapse: collapse; }
.tree th { height: 45px; padding: 0 4px 4px; background: #f4f4f4; font-weight: 400; text-align: left; white-space: nowrap; }
.tree .c-name { width: 273px; border-right: 2px solid #bbb; }
.tree.wide .c-name { width: 369px; }
.tree td { height: 36px; padding: 0 0 0 7px; line-height: 34px; vertical-align: top; white-space: nowrap; }
.tree td:first-child { padding: 0; }
.node { display: flex; align-items: flex-start; height: 36px; }
.ex { width: 40px; height: 36px; display: grid; place-items: center; }
.ex.open::after { content: ""; width: 16px; height: 9px; background: #555; clip-path: polygon(0 0, 100% 0, 50% 100%); }
.ex.shut::after { content: ""; width: 10px; height: 16px; background: #555; clip-path: polygon(0 0, 100% 50%, 0 100%); }
.ic { display: grid; place-items: center; width: 44px; height: 36px; margin-right: 6px; }
.ic svg { width: 32px; height: 32px; }
.sel td:first-child { background: #80bbec; }
.sel .ex:first-child, .sel .ic { background: #a9cdea; }

.scroll { display: flex; height: 30px; margin-top: auto; background: #f4f4f4; flex: none; }
.scroll button { display: grid; place-items: center; width: 32px; height: 30px; padding-left: 5px; }
.scroll button::after { content: ""; width: 16px; height: 16px; border: solid #000; border-width: 0 0 2px 2px; transform: rotate(45deg); }
.scroll .next { width: 26px; padding: 0 10px 0 0; }
.scroll .next::after { transform: rotate(225deg); }
.track { flex: 1; }
.thumb { display: block; width: 93%; height: 100%; background: #bcbcbc; }
.thumb.short { width: 73%; }

/* 3D and plane views */
.views { flex: 1; min-width: 0; display: grid; grid-template: 1fr 1fr / 1fr 1fr; gap: 8px 9px; padding-bottom: 6px; }
.view { display: flex; flex-direction: column; min-width: 0; min-height: 0; overflow: hidden; }
.canvas { flex: 1; width: 100%; min-height: 0; }
.mesh { stroke: #434545; shape-rendering: crispEdges; }

.sweeps { display: flex; flex-direction: column; width: 689px; flex: none; padding-bottom: 4px; }
.sweep-tools { display: flex; align-items: center; gap: 10px; height: 64px; margin: 2px 0 0 4px; padding-left: 12px; background: #fff; }
.sweep-tools button { width: 40px; height: 40px; }
.sweep-tools svg { width: 40px; height: 40px; overflow: visible; }
.sweep-tools .sep { width: 2px; height: 24px; background: #ddd; margin: 0 3px 0 0; }
.sweep-list { flex: 1; margin-left: 4px; background: #e5e5e5; border: 2px solid #b0b0b0; border-right: 0; list-style: none; }
.sweep-list li { display: flex; height: 36px; line-height: 34px; background: #80bbec; }
.sweep-list i { width: 64px; padding: 2px 0 0 26px; margin-right: 6px; background: #a9cdea; }
.sweep-list svg { width: 32px; height: 32px; }

/* console and script variables */
.lower { display: grid; grid-template-columns: 1970fr 12px 1607fr; height: 286px; flex: none; }
.lower .split.col { width: 12px; padding-top: 140px; }
.console { display: flex; min-height: 0; overflow: hidden; background: #e5e5e5; padding: 2px 5px 0 0; }
.strip { display: flex; flex-direction: column; align-items: center; gap: 14px; width: 48px; flex: none; padding: 6px 6px 0 0; overflow: hidden; }
.strip button { height: 18px; flex: none; }
.strip span { writing-mode: vertical-rl; transform: rotate(180deg); margin-top: 174px; white-space: nowrap; font-size: 29px; }
.console textarea { flex: 1; padding: 8px; background: #fff; border: solid #a8a8a8; border-width: 2px 0 0 2px; resize: none; }
.vars { padding: 0 0 0 4px; overflow: hidden; }
.vars .listbox { border-right: 0; }
.vars .c-name { width: 198px; }

/* sweep dialog */
.dialog { position: absolute; left: calc(50% - 593px); top: 487px; width: 1358px; padding: 0 22px 23px; background: #f4f4f4; border-radius: 16px; box-shadow: 0 0 0 2px rgba(80, 80, 80, .6), 0 40px 90px rgba(0, 0, 0, .4); }
.caption { display: flex; align-items: center; height: 48px; margin: 0 -22px; padding: 0 20px 0 12px; background: linear-gradient(90deg, #eef3fb, #ebf4f6, #eef3fb); border-radius: 16px 16px 0 0; font: 20px/28px "Noto Sans", sans-serif; color: #000; }
.caption svg { width: 28px; height: 28px; margin-right: 4px; }
.caption button svg { width: 16px; height: 16px; margin: 0; }
.caption span { flex: 1; }
.field { display: flex; align-items: center; gap: 15px; margin-top: 23px; }
.field label { padding-bottom: 2px; }
.field input { flex: 1; height: 44px; padding: 0 4px 2px; border: 2px solid #6f6f6f; }
.tabs { display: flex; margin-top: 12px; height: 56px; }
.tabs button { padding: 0 9px 2px; border: 2px solid #9a9a9a; border-bottom: 0; }
.tabs .active { background: linear-gradient(#80c0fc, #c9d6dc); position: relative; }
.pane { margin-top: -2px; padding: 18px 18px 20px 20px; border: 2px solid #9a9a9a; }
.pane h3 { padding-left: 15px; font-size: 25px; font-weight: 400; }
.group { margin-top: 9px; padding: 19px 22px 22px 20px; border: 2px solid #dadada; background: #f1f1f1; }
.line { display: flex; align-items: center; height: 38px; margin-bottom: 12px; background: #f5f5f5; }
.line.first { height: 36px; }
.line input { width: 24px; height: 24px; margin-right: 12px; border: 2px solid #90caf9; border-radius: 50%; }
.line input:checked { background: radial-gradient(circle, #6b7da4 6px, transparent 7px); }
.line.muted { color: #777; }
.line.muted input { width: 28px; height: 28px; border-color: #999; border-radius: 0; }
.grid-frame { padding: 0 14px 4px 8px; border: 2px solid #b5b5b5; background: linear-gradient(90deg, #f5f5f5 8px, #e5e5e5 8px); }
.ports { width: 100%; table-layout: fixed; border-collapse: collapse; }
.ports th { height: 43px; background: #f5f5f5; border-right: 2px solid #b5b5b5; font-weight: 400; }
.ports .bold { font-weight: 700; }
.ports td { height: 60px; padding: 0 0 2px 6px; background: #e5e5e5; border: solid #c0c0c0; border-width: 0 1px 2px 0; }
.ports td.ro { background: #bcbcbc; border-color: #e5e5e5; }
.ports td.picked { background: linear-gradient(#b0d2ee, #a3caec); box-shadow: inset 0 0 0 2px #83b8e4; }
.actions { display: flex; justify-content: flex-end; gap: 12px; margin-top: 12px; }
.actions button { height: 55px; padding: 0 9px 2px; background: #fff; border: 2px solid #6f6f6f; }

/* red call-outs over the dialog */
.mark { position: absolute; border: 5px solid #ff1e10; border-radius: 5px; pointer-events: none; }
.mark-define { left: 39px; top: 285px; width: 343px; height: 180px; }
.mark-location { left: 1062px; top: 516px; width: 219px; height: 355px; }
.note { position: absolute; color: #ff1e10; font-size: 37px; line-height: 48px; }
.note-define { left: 279px; top: 429px; }
.note-location { left: 1064px; top: 435px; }

.watermark { position: absolute; right: 4px; bottom: 22px; font: 69px/80px "Liberation Sans", sans-serif; color: #dcdcdc; text-shadow: 2px 2px 1px #b0b0b0, -1px -1px 1px #f6f6f6; }
```
